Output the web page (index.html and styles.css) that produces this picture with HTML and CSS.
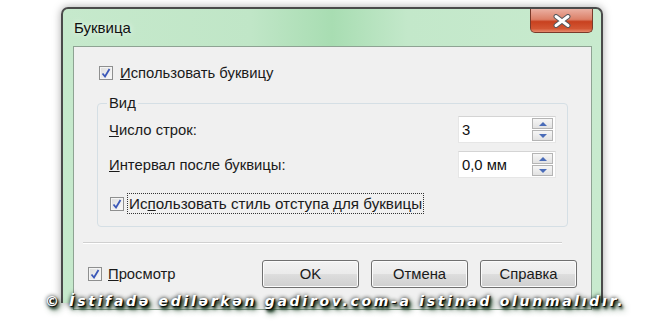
FILE: index.html
```html
<!DOCTYPE html>
<html lang="ru">
<head>
    <meta charset="UTF-8">
    <title>Буквица</title>
    <link rel="stylesheet" href="styles.css">
</head>
<body>

<div class="window">
    <div class="titlebar">
        <span class="title">Буквица</span>
        <div class="close">
            <svg width="22" height="14" viewBox="0 0 22 14">
                <path d="M5 2.5 L17 11.5 M17 2.5 L5 11.5" stroke="#55595e" stroke-width="5" stroke-linecap="round"/>
                <path d="M5 2.5 L17 11.5 M17 2.5 L5 11.5" stroke="#fff" stroke-width="3" stroke-linecap="round"/>
            </svg>
        </div>
    </div>

    <div class="client">
        <label class="check use-drop">
            <span class="box"><svg width="10" height="10" viewBox="0 0 10 10"><path d="M1.5 5.5 L4 8.5 L8.5 1" fill="none" stroke="#3b58b8" stroke-width="1.8"/></svg></span>
            <span><u>И</u>спользовать буквицу</span>
        </label>

        <fieldset class="group">
            <legend>Вид</legend>
            <div class="field">
                <span><u>Ч</u>исло строк:</span>
                <div class="spin">
                    <span class="value">3</span>
                    <div class="arrows">
                        <span class="arrow"><i class="up"></i></span>
                        <span class="arrow"><i class="down"></i></span>
                    </div>
                </div>
            </div>
            <div class="field">
                <span><u>И</u>нтервал после буквицы:</span>
                <div class="spin">
                    <span class="value">0,0 мм</span>
                    <div class="arrows">
                        <span class="arrow"><i class="up"></i></span>
                        <span class="arrow"><i class="down"></i></span>
                    </div>
                </div>
            </div>
            <label class="check indent-style">
                <span class="box"><svg width="10" height="10" viewBox="0 0 10 10"><path d="M1.5 5.5 L4 8.5 L8.5 1" fill="none" stroke="#3b58b8" stroke-width="1.8"/></svg></span>
                <span class="focus">Ис<u>п</u>ользовать стиль отступа для буквицы</span>
            </label>
        </fieldset>

        <div class="separator"></div>

        <div class="footer">
            <label class="check preview">
                <span class="box"><svg width="10" height="10" viewBox="0 0 10 10"><path d="M1.5 5.5 L4 8.5 L8.5 1" fill="none" stroke="#3b58b8" stroke-width="1.8"/></svg></span>
                <span><u>П</u>росмотр</span>
            </label>
            <div class="buttons">
                <button class="btn">OK</button>
                <button class="btn">Отмена</button>
                <button class="btn">Справка</button>
            </div>
        </div>
    </div>
</div>

<div class="watermark">© İstifadə edilərkən gadirov.com-a istinad olunmalıdır.</div>

</body>
</html>
```

FILE: styles.css
```css
body {
    position: relative;
    margin: 0;
    height: 330px;
    background: #fff;
    font-family: "Liberation Sans", Arial, sans-serif;
    font-size: 14.8px;
    color: #1a1a1a;
}

.window {
    width: 542px;
    height: 296px;
    margin: 7px 0 0 61px;
    padding: 0 9px 0 10px;
    box-sizing: border-box;
    border: 2px solid #4a4a4a;
    border-bottom: none;
    border-radius: 7px 7px 0 0;
    background: linear-gradient(90deg, #c6e9cc 0%, #c0e6c7 35%, #a8ddb2 50%, #c3e8ca 64%, #c8eace 100%);
    box-shadow: 0 0 8px rgba(0, 0, 0, 0.35);
}

/* Title bar */
.titlebar {
    display: flex;
    justify-content: space-between;
    align-items: flex-start;
    height: 37px;
}

.title {
    padding-top: 10px;
    margin-left: 1px;
    font-size: 15px;
    color: #111;
    text-shadow: 0 0 6px rgba(255, 255, 255, 0.9);
}

.close {
    display: flex;
    justify-content: center;
    align-items: center;
    width: 61px;
    height: 23px;
    margin-right: -1px;
    border: 1px solid #7a3a2a;
    border-top: none;
    border-radius: 0 0 5px 5px;
    background: linear-gradient(180deg, #eab0a2 0%, #dc8068 45%, #c8411f 55%, #d35633 85%, #e68b6e 100%);
}

/* Client area */
.client {
    height: 262px;
    background: #f0f0f0;
    border: 1px solid #8ea393;
}

.check {
    display: flex;
    align-items: center;
    gap: 7px;
}

.box {
    display: flex;
    justify-content: center;
    align-items: center;
    width: 12px;
    height: 12px;
    border: 1px solid #8e8f8f;
    background: linear-gradient(135deg, #dcdcdc, #fbfbfb);
    box-shadow: inset 0 0 0 1px #f4f4f4;
}

.use-drop {
    margin: 18px 0 0 25px;
}

.group {
    margin: 14px 23px 0 23px;
    padding: 5px 11px 13px 11px;
    border: 1px solid #d5dfe5;
    border-radius: 4px;
}

.group legend {
    padding: 0 2px;
    margin-left: -2px;
    line-height: 16px;
}

.field {
    display: flex;
    justify-content: space-between;
    align-items: center;
    margin-bottom: 8px;
}

.spin {
    display: flex;
    align-items: center;
    justify-content: space-between;
    width: 98px;
    height: 27px;
    padding: 0 1px 0 3px;
    box-sizing: border-box;
    background: #fff;
    border: 1px solid #e6e6e6;
    border-top-color: #d4d4d4;
}

.value {
    color: #111;
}

.arrows {
    display: flex;
    flex-direction: column;
    gap: 1px;
    margin-right: 1px;
}

.arrow {
    display: flex;
    justify-content: center;
    align-items: center;
    width: 19px;
    height: 9px;
    border: 1px solid #b4b4b4;
    background: linear-gradient(180deg, #f6f6f6, #e2e2e2);
}

.arrow i {
    width: 0;
    height: 0;
    border-left: 4px solid transparent;
    border-right: 4px solid transparent;
}

.arrow .up {
    border-bottom: 4px solid #4a6cb8;
}

.arrow .down {
    border-top: 4px solid #4a6cb8;
}

.indent-style {
    margin: 16px 0 0 1px;
    gap: 4px;
}

.indent-style .focus {
    font-size: 15.2px;
}

.focus {
    outline: 1px dotted #333;
    padding: 1px 1px;
}

.separator {
    margin: 15px 29px 0 9px;
    border-top: 1px solid #d0d0d0;
    border-bottom: 1px solid #fff;
}

.footer {
    display: flex;
    justify-content: space-between;
    align-items: center;
    margin: 16px 14px 0 14px;
}

.preview {
    gap: 6px;
}

.buttons {
    display: flex;
    gap: 12px;
}

.btn {
    width: 97px;
    height: 28px;
    font-family: inherit;
    font-size: 14.8px;
    color: #1a1a1a;
    border: 1px solid #707070;
    border-radius: 3px;
    background: linear-gradient(180deg, #f3f3f3 0%, #ebebeb 48%, #dddddd 52%, #cfcfcf 100%);
    box-shadow: inset 0 0 0 1px #fbfbfb;
}

/* Watermark over the bottom of the window */
.watermark {
    position: absolute;
    left: 45px;
    top: 293px;
    white-space: nowrap;
    font-family: "DejaVu Sans", Verdana, sans-serif;
    font-weight: bold;
    font-style: italic;
    font-size: 14px;
    letter-spacing: 2.7px;
    color: #fff;
    text-shadow: 1px 1px 1px #000, 2px 3px 3px #0c2a14, 0 0 4px #000, 3px 4px 6px #1c4a26;
}
```
